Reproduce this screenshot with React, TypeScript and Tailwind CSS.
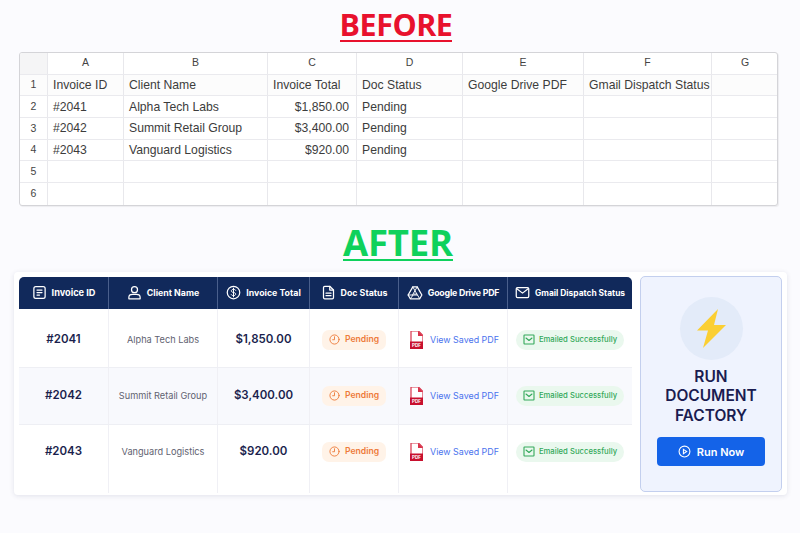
import React from "react";

const colW = "grid grid-cols-[28px_76px_144px_89px_106px_121px_128px_66px]";
const rows: string[][] = [
  ["", "A", "B", "C", "D", "E", "F", "G"],
  ["1", "Invoice ID", "Client Name", "Invoice Total", "Doc Status", "Google Drive PDF", "Gmail Dispatch Status", ""],
  ["2", "#2041", "Alpha Tech Labs", "$1,850.00", "Pending", "", "", ""],
  ["3", "#2042", "Summit Retail Group", "$3,400.00", "Pending", "", "", ""],
  ["4", "#2043", "Vanguard Logistics", "$920.00", "Pending", "", "", ""],
  ["5", "", "", "", "", "", "", ""],
  ["6", "", "", "", "", "", "", ""],
];

function Sheet() {
  return (
    <div className="w-[759px] ml-[19px] mt-[10px] rounded-[3px] border border-[#d4d4d8] bg-white overflow-hidden font-['Liberation_Sans',sans-serif] shadow-[1px_1px_1px_rgba(0,0,0,0.06)]">
      {rows.map((r, i) => (
        <div key={i} className={`${colW} h-[21.7px] border-b border-[#eaeaee] last:border-b-0 ${i === 1 ? "bg-[#fcfcfc]" : ""}`}>
          {r.map((c, j) => {
            const head = i === 0 || j === 0;
            const right = i > 1 && j === 3;
            return (
              <div
                key={j}
                className={`flex items-center border-r border-[#e8e8ec] last:border-r-0 whitespace-nowrap overflow-hidden ${
                  head ? "justify-center text-[10.5px] text-[#444]" : "text-[12.2px] text-[#3c3c3c] px-[5px]"
                } ${right ? "justify-end pr-[7px]" : ""} ${i === 0 && j === 0 ? "bg-[#f5f5f6]" : ""}`}
              >
                {c}
              </div>
            );
          })}
        </div>
      ))}
    </div>
  );
}

const I = {
  doc: (
    <svg width="15" height="15" viewBox="0 0 24 24" fill="none" stroke="currentColor" strokeWidth="2" strokeLinecap="round" strokeLinejoin="round">
      <rect x="3" y="2.500" width="18" height="19" rx="3" />
      <path d="M8 8h8M8 12h8M8 16h4" />
    </svg>
  ),
  user: (
    <svg width="15" height="15" viewBox="0 0 24 24" fill="none" stroke="currentColor" strokeWidth="2" strokeLinecap="round" strokeLinejoin="round">
      <circle cx="12" cy="7.500" r="4.800" />
      <path d="M3 22v-2.500C3 16.500 6 15 9 15h6c3 0 6 1.500 6 4.500V22z" />
    </svg>
  ),
  dollar: (
    <svg width="15" height="15" viewBox="0 0 24 24" fill="none" stroke="currentColor" strokeWidth="2" strokeLinecap="round" strokeLinejoin="round">
      <circle cx="12" cy="12" r="10" />
      <path d="M15.500 8.500c-.6-1-1.800-1.500-3.500-1.500-2 0-3.500 1-3.500 2.500s1.500 2.200 3.500 2.500 3.500 1 3.500 2.500-1.500 2.500-3.500 2.500c-1.700 0-2.900-.5-3.500-1.500M12 5v14" strokeWidth="1.600" />
    </svg>
  ),
  file: (
    <svg width="15" height="15" viewBox="0 0 24 24" fill="none" stroke="currentColor" strokeWidth="2" strokeLinecap="round" strokeLinejoin="round">
      <path d="M14 2H6a2 2 0 0 0-2 2v16a2 2 0 0 0 2 2h12a2 2 0 0 0 2-2V8z" />
      <path d="M14 2v6h6M8 13h8M8 17h8" />
    </svg>
  ),
  drive: (
    <svg width="16" height="15" viewBox="0 0 24 24" fill="none" stroke="currentColor" strokeWidth="2" strokeLinecap="round" strokeLinejoin="round">
      <path d="M8.500 3h7L23 16l-3.500 6h-15L1 16z" />
      <path d="M8.500 3 15 14.500M15.500 3 8 16M1 16h15M9 16l-4.500 6M15 14.500h-4M16 16l3.500 6" strokeWidth="1.500" />
    </svg>
  ),
  mail: (
    <svg width="15" height="15" viewBox="0 0 24 24" fill="none" stroke="currentColor" strokeWidth="2" strokeLinecap="round" strokeLinejoin="round">
      <rect x="2" y="4" width="20" height="16" rx="2" />
      <path d="m3 6 9 7 9-7" />
    </svg>
  ),
};

const gridCols = "grid grid-cols-[90px_109px_92px_89px_109px_124px]";

const headers: [React.ReactNode, string, string][] = [
  [I.doc, "Invoice ID", "text-[9.2px]"],
  [I.user, "Client Name", "text-[8.8px]"],
  [I.dollar, "Invoice Total", "text-[8.8px]"],
  [I.file, "Doc Status", "text-[8.8px]"],
  [I.drive, "Google Drive PDF", "text-[8.8px] tracking-[-0.2px]"],
  [I.mail, "Gmail Dispatch Status", "text-[8.4px]"],
];

const data = [
  { id: "#2041", name: "Alpha Tech Labs", total: "$1,850.00", h: "h-[58px] pt-[4px]", bg: "bg-white" },
  { id: "#2042", name: "Summit Retail Group", total: "$3,400.00", h: "h-[56px]", bg: "bg-[#f8f9fd]" },
  { id: "#2043", name: "Vanguard Logistics", total: "$920.00", h: "h-[68px] pb-[14px]", bg: "bg-white" },
];

function PdfIcon() {
  return (
    <svg width="13" height="18" viewBox="0 0 13 18">
      <path d="M1 0h7.500L13 4.500V18H1z" fill="#fff" stroke="#d8324a" strokeWidth="1.200" />
      <path d="M8 0v5h5z" fill="#d8324a" />
      <rect x="0" y="10.500" width="13" height="7.500" fill="#c8102e" />
      <text x="6.500" y="16" fontSize="4.500" fill="#fff" textAnchor="middle" fontWeight="700" fontFamily="Inter, sans-serif">PDF</text>
    </svg>
  );
}

function DataTable() {
  return (
    <div className="w-[613px] flex flex-col">
      <div className={`${gridCols} h-[32px] bg-[#11295b] rounded-t-[5px]`}>
        {headers.map(([ic, t, size], i) => (
          <div key={i} className={`flex items-center justify-center gap-[5px] border-r border-[#4a5f8c] last:border-r-0 text-white font-bold ${size} whitespace-nowrap`}>
            {ic}
            <span>{t}</span>
          </div>
        ))}
      </div>
      {data.map((d) => (
        <div key={d.id} className={`${gridCols} ${d.bg} border-b border-[#eeeff4] last:border-b-0`}>
          <div className={`${d.h} flex items-center justify-center border-r border-[#f0f0f5] text-[11.5px] font-semibold text-[#1b1f4d]`}>{d.id}</div>
          <div className={`${d.h} flex items-center justify-center border-r border-[#f0f0f5] text-[9.2px] text-[#5f6270] whitespace-nowrap`}>{d.name}</div>
          <div className={`${d.h} flex items-center justify-center border-r border-[#f0f0f5] text-[11.5px] font-semibold text-[#1b1f4d]`}>{d.total}</div>
          <div className={`${d.h} flex items-center justify-center border-r border-[#f0f0f5]`}>
            <span className="flex items-center gap-[5px] h-[20px] px-[7px] rounded-[7px] bg-[#fff3e8] text-[#ee7b3a] text-[8.6px] font-semibold">
              <svg width="11" height="11" viewBox="0 0 24 24" fill="none" stroke="currentColor" strokeWidth="2" strokeLinecap="round" strokeLinejoin="round">
                <circle cx="12" cy="12" r="10" />
                <path d="M12 6v6.500H8" />
              </svg>
              Pending
            </span>
          </div>
          <div className={`${d.h} flex items-center justify-center gap-[7px] border-r border-[#f0f0f5] pl-[3px]`}>
            <PdfIcon />
            <span className="text-[8.9px] text-[#4a73ee] whitespace-nowrap">View Saved PDF</span>
          </div>
          <div className={`${d.h} flex items-center justify-center`}>
            <span className="flex items-center gap-[4px] h-[20px] px-[7px] rounded-[10px] bg-[#eaf8ee] text-[#32a85a] text-[7.7px] font-medium whitespace-nowrap">
              <svg width="12" height="11" viewBox="0 0 24 22" fill="none" stroke="currentColor" strokeWidth="2.200" strokeLinecap="round" strokeLinejoin="round">
                <rect x="2" y="2" width="20" height="18" rx="1" />
                <path d="m6 8 6 5 6-5" />
              </svg>
              Emailed Successfully
            </span>
          </div>
        </div>
      ))}
    </div>
  );
}

function RunPanel() {
  return (
    <div className="w-[142px] ml-[8px] -mt-[1px] h-[216px] rounded-[5px] border border-[#c3cfee] bg-[#eff3fe] flex flex-col items-center pt-[20px]">
      <div className="w-[63px] h-[63px] rounded-full bg-[#e3ebf9] flex items-center justify-center">
        <svg width="29" height="39" viewBox="0 0 29 39">
          <path d="M21 0 0 21.500h11L6 39l23-23H17z" fill="#fbcf33" />
        </svg>
      </div>
      <div className="mt-[7px] text-center text-[#1a1c50] font-semibold text-[15.5px] leading-[19.5px] w-full">
        RUN<br />DOCUMENT<br />FACTORY
      </div>
      <div className="mt-[12px] w-[108px] h-[29px] rounded-[4px] bg-[#1463e8] text-white flex items-center justify-center gap-[6px] text-[11px] font-semibold">
        <svg width="13" height="13" viewBox="0 0 24 24" fill="none" stroke="currentColor" strokeWidth="2">
          <circle cx="12" cy="12" r="10" />
          <path d="M10 8l6 4-6 4z" />
        </svg>
        Run Now
      </div>
    </div>
  );
}

export default function App() {
  return (
    <div className="w-[800px] h-[533px] overflow-hidden bg-[#fbfbfe]">
      <div className="w-[792px] pt-[9px] flex justify-center">
        <span className="font-['Open_Sans',sans-serif] font-bold text-[30.5px] leading-[31px] tracking-[-0.5px] text-[#e8112d] border-b-[2.500px] border-current">
          BEFORE
        </span>
      </div>
      <Sheet />
      <div className="w-[796px] mt-[20px] flex justify-center">
        <span className="font-['Open_Sans',sans-serif] font-bold text-[36.5px] leading-[33px] tracking-[-0.2px] text-[#0fd15c] border-b-[2.500px] border-current">
          AFTER
        </span>
      </div>
      <div className="font-['Inter',sans-serif] ml-[14px] mt-[11px] w-[773px] h-[223px] bg-white rounded-[4px] shadow-[0_1px_5px_rgba(30,40,90,0.12)] p-[5px] flex items-start">
        <DataTable />
        <RunPanel />
      </div>
    </div>
  );
}
